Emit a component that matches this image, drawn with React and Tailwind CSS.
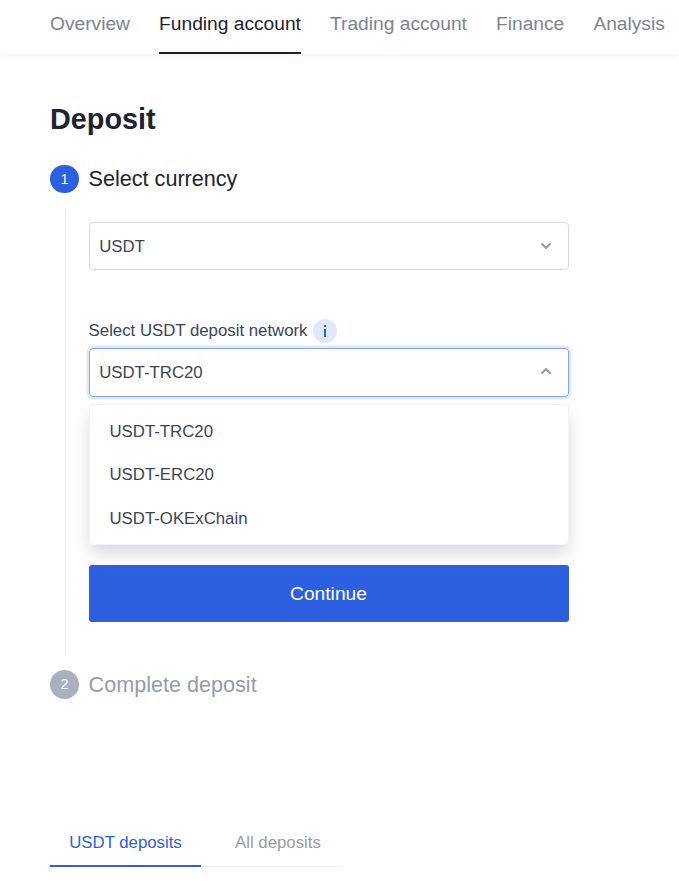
import { ChevronDown, ChevronUp } from "lucide-react";

const tabs = ["Overview", "Funding account", "Trading account", "Finance", "Analysis"];
const networks = ["USDT-TRC20", "USDT-ERC20", "USDT-OKExChain"];

function Header() {
  return (
    <header className="h-[54px] bg-white pl-[50px] shadow-[0_2px_5px_rgba(0,0,0,0.05)]">
      <nav className="flex h-full gap-[29.1px] text-[19.2px] leading-[48px] whitespace-nowrap text-[#7b8496]">
        {tabs.map((tab, i) => (
          <a key={tab} className={i === 1 ? "h-full shrink-0 border-b-2 border-[#1d2331] text-[#1d2331]" : "shrink-0"}>
            {tab}
          </a>
        ))}
      </nav>
    </header>
  );
}

function StepTitle({ number, title, active }) {
  return (
    <div className="flex h-[29px] items-center gap-[9.6px]">
      <span
        className={
          active
            ? "mt-px flex h-7 w-[29px] items-center justify-center rounded-full bg-[#2d60e0] text-[14.4px] leading-none text-white"
            : "flex size-[29px] items-center justify-center rounded-full bg-[#aab0bf] text-[14.4px] leading-none text-white"
        }
      >
        {number}
      </span>
      <h2 className={active ? "text-[21.6px] leading-[29px] text-[#1d2331]" : "text-[21.6px] leading-[29px] text-[#959cac]"}>{title}</h2>
    </div>
  );
}

export default function App() {
  return (
    <div className="h-[881px] w-[679px] overflow-hidden bg-white font-['Liberation_Sans',Arial,sans-serif] text-[#3c4457]">
      <Header />
      <main className="pl-[50px]">
        <h1 className="pt-[46px] text-[28.8px] leading-[38px] font-bold text-[#1d2331]">Deposit</h1>
        <div className="mt-[26px]">
          <StepTitle number={1} title="Select currency" active />
        </div>
        <section className="mt-[15px] ml-[15px] h-[448px] w-[504px] border-l border-[#efeff3] pt-[14px] pl-[23px] text-[16.8px]">
          <div className="flex h-12 w-[480px] items-center justify-between rounded-[4px] border border-[#d5d8e4] pr-[14px] pl-[9.2px]">
            <span className="pt-0.5">USDT</span>
            <ChevronDown className="size-4 text-[#8f9bb0]" strokeWidth={3} />
          </div>
          <div className="mt-12 flex h-[26px] items-center gap-[5px] leading-6">
            <span className="-ml-[0.4px]">Select USDT deposit network</span>
            <span className="flex size-6 items-center justify-center rounded-full bg-[#e0e8fd]">
              <svg className="h-3 w-1" viewBox="0 0 4 12" fill="#2d60e0">
                <rect x="1" width="2" height="2" />
                <rect x="1" y="4" width="2" height="8" />
              </svg>
            </span>
          </div>
          <div className="relative mt-1">
            <div className="flex h-[49px] w-[480px] items-center justify-between rounded-[4px] border border-[#85a5fa] pr-[14px] pl-[9.2px] shadow-[0_0_0_2.4px_#e0e8fd]">
              <span>USDT-TRC20</span>
              <ChevronUp className="mb-[3px] size-4 text-[#8f9bb0]" strokeWidth={3} />
            </div>
            <ul className="absolute top-14 left-0 h-[141px] w-[480px] rounded-[4px] border border-[#f0f2f8] bg-white py-[5px] shadow-[0_9px_18px_-1px_rgba(0,0,0,0.16)]">
              {networks.map((network) => (
                <li key={network} className="h-[43.4px] pl-[19.5px] leading-[43px]">
                  {network}
                </li>
              ))}
            </ul>
          </div>
          <button className="mt-[168px] block h-[57px] w-[480px] rounded-[3px] bg-[#2d60e0] pt-0.5 pr-px text-[19.2px] text-white">Continue</button>
        </section>
        <div className="mt-[14px]">
          <StepTitle number={2} title="Complete deposit" />
        </div>
        <div className="mt-[120px] flex h-[48px] w-[290px] border-b border-[#eef0f7] text-[16.8px] leading-[48px] whitespace-nowrap">
          <span className="h-12 w-[151px] shrink-0 border-b-2 border-[#2d60e0] text-center text-[#2d60e0]">USDT deposits</span>
          <span className="pl-[34px] text-[#959cac]">All deposits</span>
        </div>
      </main>
    </div>
  );
}
